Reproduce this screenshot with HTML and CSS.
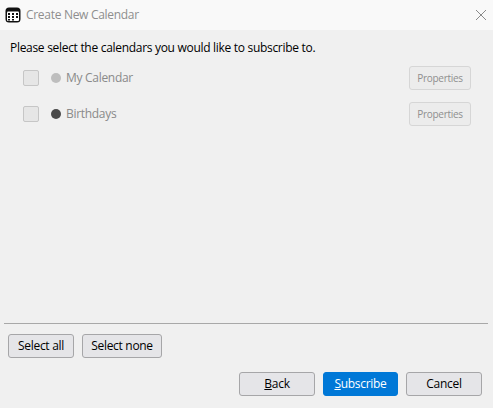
FILE: index.html
```html
<!DOCTYPE html>
<html lang="en">
<head>
    <meta charset="UTF-8">
    <title>Create New Calendar</title>
    <link rel="stylesheet" href="styles.css">
</head>
<body>
    <div class="dialog">
        <div class="titlebar">
            <svg class="app-icon" width="16" height="16" viewBox="0 0 16 16">
                <rect x="0.5" y="0.5" width="15" height="15" rx="3.5" fill="#111"/>
                <rect x="2" y="4.5" width="12" height="9.5" rx="1" fill="#fff"/>
                <g fill="#111">
                    <rect x="3" y="6" width="2" height="2"/>
                    <rect x="7" y="6" width="2" height="2"/>
                    <rect x="11" y="6" width="2" height="2"/>
                    <rect x="3" y="9" width="2" height="2"/>
                    <rect x="7" y="9" width="2" height="2"/>
                    <rect x="11" y="9" width="2" height="2"/>
                    <rect x="3" y="12" width="2" height="1.5"/>
                    <rect x="7" y="12" width="2" height="1.5"/>
                </g>
            </svg>
            <span class="title">Create New Calendar</span>
            <svg class="close" width="12" height="12" viewBox="0 0 12 12">
                <path d="M1 1L11 11M11 1L1 11" stroke="#8a8a8a" stroke-width="1" fill="none"/>
            </svg>
        </div>

        <div class="content">
            <p class="intro">Please select the calendars you would like to subscribe to.</p>

            <div class="calendar-row">
                <span class="check"></span>
                <span class="dot dot-light"></span>
                <span class="name">My Calendar</span>
                <button class="btn-props">Properties</button>
            </div>
            <div class="calendar-row">
                <span class="check"></span>
                <span class="dot dot-dark"></span>
                <span class="name">Birthdays</span>
                <button class="btn-props">Properties</button>
            </div>
        </div>

        <div class="footer">
            <hr class="separator">
            <div class="select-buttons">
                <button class="btn btn-all">Select all</button>
                <button class="btn btn-none">Select none</button>
            </div>
            <div class="nav-buttons">
                <button class="btn btn-nav"><u>B</u>ack</button>
                <button class="btn btn-nav btn-primary"><u>S</u>ubscribe</button>
                <button class="btn btn-nav">Cancel</button>
            </div>
        </div>
    </div>
</body>
</html>
```

FILE: styles.css
```css
html, body {
    margin: 0;
    padding: 0;
    height: 100%;
}
body {
    font-family: "Open Sans", "Noto Sans", sans-serif;
    font-size: 12px;
    letter-spacing: -0.3px;
    background-color: #f0f0f0;
    color: #000;
}
.dialog {
    display: flex;
    flex-direction: column;
    height: 408px;
}
.titlebar {
    display: flex;
    align-items: center;
    height: 30px;
    padding: 0 6px 0 5px;
    background-color: #f9f9f9;
}
.title {
    margin-left: 5px;
    margin-bottom: 1px;
    color: #8e8e8e;
}
.close {
    margin-left: auto;
}
.content {
    flex: 1;
    padding: 9px 10px 0;
}
.intro {
    margin: 0 0 10px;
    line-height: 17px;
}
.calendar-row {
    display: flex;
    align-items: center;
    height: 24px;
    margin-bottom: 12px;
    padding: 0 12px 0 13px;
}
.check {
    width: 14px;
    height: 14px;
    border: 1px solid #c6c6c6;
    border-radius: 2px;
    background-color: #e6e6e6;
}
.dot {
    width: 10px;
    height: 10px;
    margin-left: 12px;
    border-radius: 50%;
}
.dot-light {
    background-color: #bebebe;
}
.dot-dark {
    background-color: #4a4a4a;
}
.name {
    margin-left: 5px;
    margin-bottom: 2px;
    color: #8a8a8a;
}
button {
    font-family: inherit;
    font-size: 12px;
    letter-spacing: inherit;
    padding: 0 0 1px;
    box-sizing: border-box;
    height: 24px;
}
.btn-props {
    width: 62px;
    margin-left: auto;
    font-size: 10px;
    color: #8f8f8f;
    background-color: #ececec;
    border: 1px solid #d6d6d6;
    border-radius: 3px;
}
.footer {
    padding: 0 11px 12px 4px;
}
.separator {
    margin: 0 -6px 10px 0;
    border: none;
    border-top: 1px solid #a8a8a8;
}
.select-buttons {
    display: flex;
    gap: 8px;
    padding-left: 4px;
    margin-bottom: 14px;
}
.btn {
    color: #000;
    background-color: #e5e5e8;
    border: 1px solid #a6a6a8;
    border-radius: 3px;
}
.btn-all {
    width: 66px;
}
.btn-none {
    width: 80px;
}
.nav-buttons {
    display: flex;
    justify-content: flex-end;
    gap: 8px;
}
.btn-nav {
    width: 76px;
}
.btn-primary {
    width: 75px;
    color: #fff;
    background-color: #0078d7;
    border-color: #0078d7;
}
```
